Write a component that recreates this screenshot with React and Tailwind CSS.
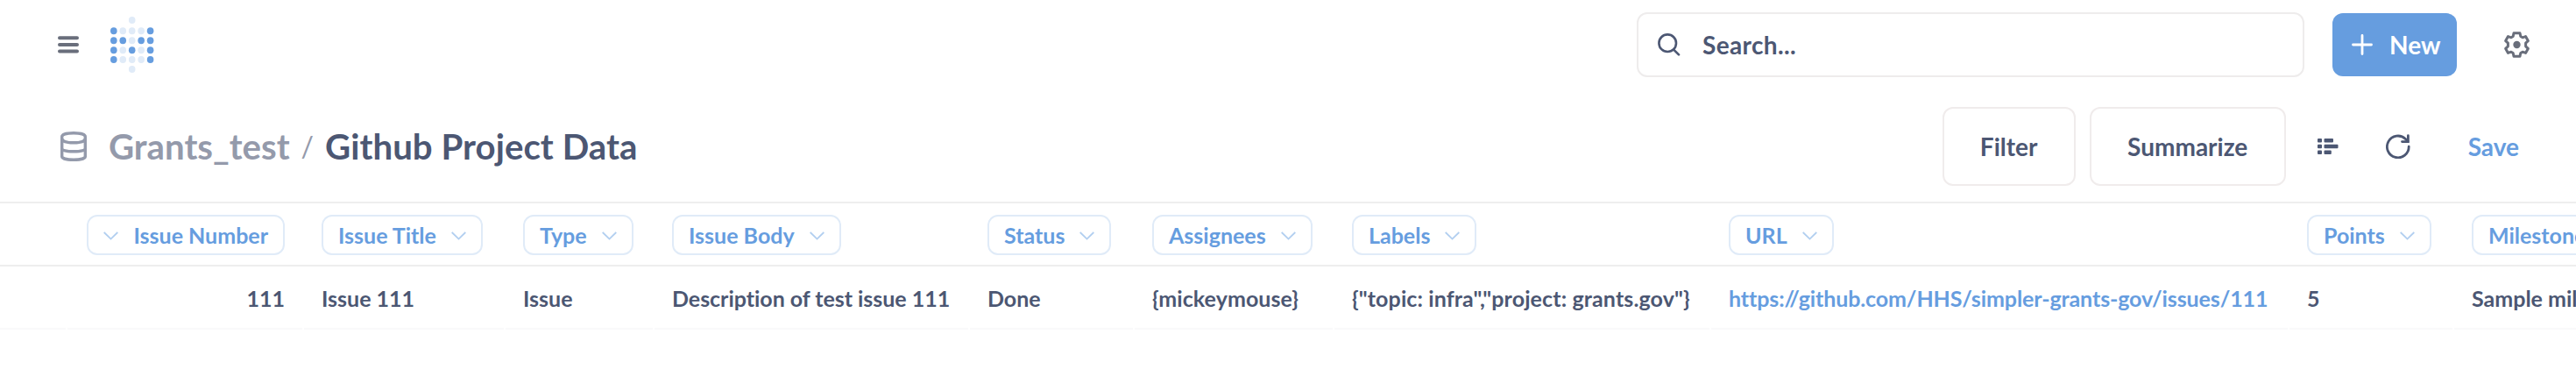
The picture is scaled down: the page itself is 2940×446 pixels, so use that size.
import React from "react";

const COLUMNS = [
  { name: "Issue Number", value: "111", width: "w-[270px]", right: true },
  { name: "Issue Title", value: "Issue 111", width: "w-[230px]" },
  { name: "Type", value: "Issue", width: "w-[170px]" },
  { name: "Issue Body", value: "Description of test issue 111", width: "w-[360px]", tracking: "tracking-[-0.03px]" },
  { name: "Status", value: "Done", width: "w-[188px]" },
  { name: "Assignees", value: "{mickeymouse}", width: "w-[228px]", tracking: "tracking-[0.08px]" },
  { name: "Labels", value: '{"topic: infra","project: grants.gov"}', width: "w-[430px]", tracking: "tracking-[0.12px]" },
  { name: "URL", value: "https://github.com/HHS/simpler-grants-gov/issues/111", width: "w-[660px]", link: true, tracking: "tracking-[-0.11px]" },
  { name: "Points", value: "5", width: "w-[188px]" },
  { name: "Milestone Title", value: "Sample milestone", width: "w-[300px]" },
];

const LOGO_ROWS = ["00100", "21112", "22122", "21212", "21112", "00100"];
const LOGO_Y = [4, 16.3, 27.2, 38.2, 49, 60];

function Logo() {
  return (
    <svg className="ml-9 h-16 w-[50px]" viewBox="0 0 50 64">
      {LOGO_ROWS.map((row, r) =>
        row.split("").map((c, i) =>
          c === "0" ? null : (
            <ellipse key={`${r}-${i}`} cx={3.8 + i * 10.45} cy={LOGO_Y[r]} rx="3.8" ry="4" fill={c === "2" ? "#669ddf" : "#e0ebf8"} />
          )
        )
      )}
    </svg>
  );
}

function Chevron() {
  return (
    <svg className="-mt-px h-[10px] w-[17px] shrink-0" viewBox="0 0 17 10" fill="none" stroke="#b2cff0" strokeWidth="1.8">
      <path d="M.7 1l7.800 7.600L16.300 1" />
    </svg>
  );
}

function TopBar() {
  return (
    <header className="flex h-[102px] items-center">
      <svg className="ml-[66px] h-5 w-6" viewBox="0 0 24 20" stroke="#696e7b" strokeWidth="4" strokeLinecap="round">
        <path d="M2 2.300h20M2 10h20M2 17.600h20" />
      </svg>
      <Logo />
      <div className="ml-auto flex h-[74px] w-[762px] items-center rounded-xl border-2 border-[#eeecec] pl-[22px]">
        <svg className="h-[26px] w-[26px]" viewBox="0 0 26 26" fill="none" stroke="#4c5773" strokeWidth="2.600" strokeLinecap="round">
          <circle cx="11.200" cy="11.200" r="9.800" />
          <path d="M18.200 18.600l5.800 5.800" />
        </svg>
        <span className="ml-[25px] text-[28px] font-bold tracking-[0.35px]">Search...</span>
      </div>
      <button className="ml-8 flex h-[72px] w-[142px] items-center rounded-xl bg-[#669ddf] pl-[22px] text-white">
        <svg className="h-6 w-6" viewBox="0 0 24 24" stroke="currentColor" strokeWidth="2.800" strokeLinecap="round">
          <path d="M12 1.500v21M1.500 12h21" />
        </svg>
        <span className="ml-[19px] text-[28px] font-bold">New</span>
      </button>
      <svg className="mr-[53px] ml-[54px] h-[30px] w-[29px]" viewBox="0 0 29 30" fill="none" stroke="#696e7b" strokeWidth="3" strokeLinejoin="round">
        <path d="M11 1.800h7l.8 3.700 2.200 1.300 3.500-1.200 2.800 5-2.700 2.600v3.600l2.700 2.600-2.800 5-3.500-1.200-2.200 1.300-.8 3.700h-7l-.8-3.700L8 23.200l-3.500 1.200-2.800-5 2.700-2.600v-3.600l-2.700-2.600 2.800-5L8 6.800l2.200-1.300z" />
        <circle cx="14.500" cy="15" r="4.200" fill="#696e7b" stroke="none" />
      </svg>
    </header>
  );
}

function TitleBar() {
  return (
    <div className="flex h-[128px] items-center pt-0.5">
      <svg className="ml-[69px] h-[34px] w-[30px]" viewBox="0 0 30 34" fill="none" stroke="#949aab" strokeWidth="3.400">
        <path d="M1.700 6C1.700 3.500 7 1.700 15 1.700S28.300 3.500 28.300 6v22.500c0 2-5.300 3.800-13.300 3.800S1.700 30.500 1.700 28.500z" />
        <path d="M1.700 8c0 3 5.300 4.800 13.300 4.800S28.300 11 28.300 8M1.700 19.500c0 2 5.300 3.300 13.300 3.300s13.300-1.300 13.300-3.300" />
      </svg>
      <div className="ml-[25px] flex items-center text-[40.2px] font-bold">
        <span className="text-[#949aab]">Grants_test</span>
        <span className="mr-[13px] ml-[13px] text-[32px] font-normal text-[#949aab]">/</span>
        <h1 className="tracking-[0.04px]">Github Project Data</h1>
      </div>
      <div className="ml-auto flex items-center text-[28px] font-bold">
        <button className="h-[90px] w-[152px] rounded-xl border-2 border-[#f0ecec]">Filter</button>
        <button className="ml-4 h-[90px] w-[224px] rounded-xl border-2 border-[#f0ecec]">Summarize</button>
        <svg className="ml-9 h-[18px] w-6" viewBox="0 0 24 18" fill="#4c5773">
          <rect width="5" height="4.400" rx="1" />
          <rect x="7.500" width="10.500" height="4.400" rx="1" />
          <rect y="6.800" width="5" height="4.400" rx="1" />
          <rect x="7.500" y="6.800" width="16" height="4.400" rx="1" />
          <rect y="13.600" width="5" height="4.400" rx="1" />
          <rect x="7.500" y="13.600" width="8.300" height="4.400" rx="1" />
        </svg>
        <svg className="ml-[54px] h-7 w-7" viewBox="0 0 28 28" fill="none" stroke="#4c5773" strokeWidth="2.800" strokeLinecap="round">
          <path d="M26.200 14.200a12.400 12.400 0 1 1-3.800-8.700l2.600 2.600" />
          <path d="M25.400 1.700v6.900h-6.900" />
        </svg>
        <span className="mr-[65px] ml-[66px] text-[#669ddf]">Save</span>
      </div>
    </div>
  );
}

export default function App() {
  return (
    <main className="h-[446px] w-full overflow-hidden bg-white font-['Lato',sans-serif] text-[#4c5773] [font-variant-ligatures:none]">
      <TopBar />
      <TitleBar />
      <section className="text-[25px] font-bold whitespace-nowrap">
        <div className="flex h-[74px] border-y-2 border-[#eeeeee] pl-[77px]">
          {COLUMNS.map((c) => (
            <div key={c.name} className={`${c.width} flex shrink-0 items-center pt-0.5 ${c.right ? "justify-end pr-[22px]" : "pl-5"}`}>
              <div className={`flex h-[46px] items-center gap-[17px] rounded-xl border-2 border-[#e0ebf8] px-[17px] pt-0.5 text-[#669ddf] ${c.right ? "flex-row-reverse" : ""}`}>
                <span>{c.name}</span>
                <Chevron />
              </div>
            </div>
          ))}
        </div>
        <div className="flex h-[72px] gap-0.5">
          <div className="w-[75px] shrink-0 border-b-2 border-[#f9f9fa]" />
          {COLUMNS.map((c) => (
            <div key={c.name} className={`${c.width} flex shrink-0 -mr-0.5 pr-0.5`}>
              <div className={`flex flex-1 items-center pt-1 ${c.right ? "justify-end pr-5" : "pl-5"} ${c.link ? "text-[#669ddf]" : ""} ${c.tracking ?? ""} border-b-2 border-[#f9f9fa]`}>
                {c.value}
              </div>
            </div>
          ))}
        </div>
      </section>
    </main>
  );
}
